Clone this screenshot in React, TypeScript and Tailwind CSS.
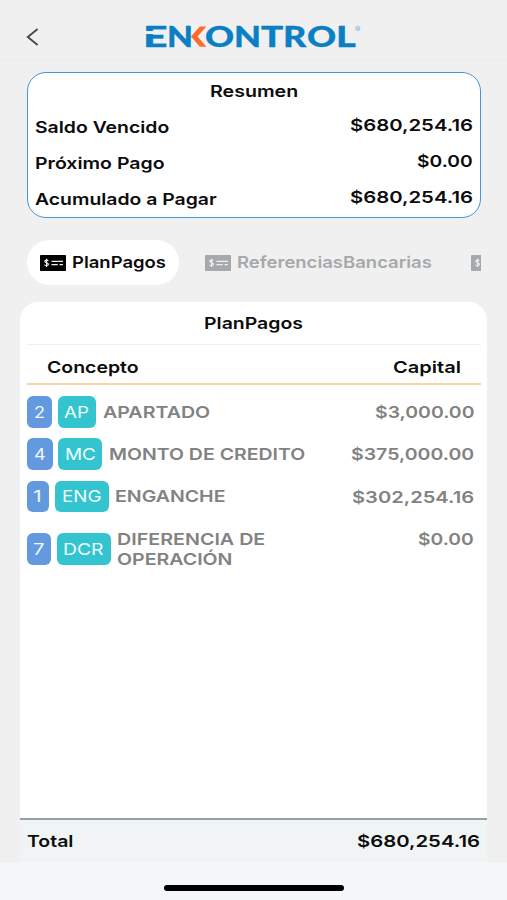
import { useLayoutEffect, useRef, useState } from "react";
import clsx from "clsx";

type FitProps = { text: string; width: number; className?: string };

// Wide-set label: stretches its text horizontally to fill the given width.
function Fit({ text, width, className }: FitProps) {
  const ref = useRef<HTMLSpanElement>(null);
  const [scale, setScale] = useState(1);
  useLayoutEffect(() => {
    if (ref.current) setScale(width / ref.current.offsetWidth);
  }, [text, width]);
  return (
    <span className={clsx("block shrink-0 whitespace-nowrap", className)} style={{ width }}>
      <span ref={ref} className="inline-block origin-left" style={{ transform: `scaleX(${scale})` }}>
        {text}
      </span>
    </span>
  );
}

function Logo() {
  const letter = "font-['Lato'] font-black [-webkit-text-stroke:0.3px_#0b7fc4]";
  return (
    <div className="flex h-[22px] items-center text-[28.5px] leading-[22px] text-[#0b7fc4]">
      <div className="relative">
        <Fit text="E" width={24} className={letter} />
        <span className="absolute left-0 top-[6px] h-[3px] w-[23px] bg-[#f0f0f0]" />
      </div>
      <Fit text="N" width={26} className={letter} />
      <svg className="-ml-[3px] h-[22px] w-[17px] shrink-0" viewBox="0 0 17 22">
        <path d="M9.8 1.5H16.4L7.6 11.6L16.4 21.7H9.8L1 11.6Z" fill="#ff6b2c" />
      </svg>
      <Fit text="O" width={29} className={clsx("-ml-[2px]", letter)} />
      <Fit text="N" width={27} className={letter} />
      <Fit text="T" width={22} className={letter} />
      <Fit text="R" width={24} className={letter} />
      <Fit text="O" width={29} className={letter} />
      <Fit text="L" width={20} className={letter} />
      <span className="-ml-px mb-[14px] text-[8px] leading-none text-[#6cabd9]">®</span>
    </div>
  );
}

function CheckIcon({ className }: { className?: string }) {
  return (
    <svg className={clsx("h-[16px] w-[26px] shrink-0", className)} viewBox="0 0 26 16">
      <rect width="26" height="16" rx="0.8" fill="currentColor" />
      <path
        d="M8.3 5.8C7.8 5 4.8 4.8 4.8 6.5C4.8 8.2 8.4 7.3 8.4 9.2C8.4 10.9 5.2 10.8 4.5 9.7M6.6 3.8V12"
        fill="none"
        stroke="#efefef"
        strokeWidth="1.2"
      />
      <path d="M11.5 6.3H23M11.5 9.6H17.7M19.5 9.6H23" fill="none" stroke="#efefef" strokeWidth="1.2" />
    </svg>
  );
}

const summary = [
  { label: "Saldo Vencido", lw: 134, value: "$680,254.16", vw: 123 },
  { label: "Próximo Pago", lw: 130, value: "$0.00", vw: 56 },
  { label: "Acumulado a Pagar", lw: 182, value: "$680,254.16", vw: 123 },
];

const concepts = [
  { n: "2", nb: "w-[25px]", nw: 11, gap: "ml-[6px]", code: "AP", cb: "w-[38.5px]", cw: 25, lines: [{ t: "APARTADO", w: 107 }], tm: "ml-[6.5px]", value: "$3,000.00", vw: 99 },
  { n: "4", nb: "w-[26px]", nw: 12, gap: "ml-[5.5px]", code: "MC", cb: "w-[44px]", cw: 31, lines: [{ t: "MONTO DE CREDITO", w: 196 }], tm: "ml-[6.5px]", value: "$375,000.00", vw: 123 },
  { n: "1", nb: "w-[22.5px]", nw: 9, gap: "ml-[6px]", code: "ENG", cb: "w-[53.5px]", cw: 40, lines: [{ t: "ENGANCHE", w: 110 }], tm: "ml-[6px]", value: "$302,254.16", vw: 122 },
  { n: "7", nb: "w-[24.5px]", nw: 11, gap: "ml-[5.5px]", code: "DCR", cb: "w-[54px]", cw: 41, lines: [{ t: "DIFERENCIA DE", w: 148 }, { t: "OPERACIÓN", w: 115 }], tm: "ml-[6px]", value: "$0.00", vw: 56 },
];

export default function App() {
  return (
    <div className="flex h-[900px] w-[507px] flex-col overflow-hidden bg-[#f0f0f0] font-['Inter',sans-serif] text-[16.5px] font-semibold leading-[20px] text-[#0c0c0c]">
      <header className="flex h-[61px] shrink-0 border-b border-[#eaebec] pl-[26px] pt-[25px]">
        <svg className="mt-[3px] h-[18px] w-[13px] shrink-0" viewBox="0 0 13 18" fill="none">
          <path d="M11.6 1L1.8 9L11.6 17" stroke="#484848" strokeWidth="1.9" />
        </svg>
        <div className="ml-[104px]">
          <Logo />
        </div>
      </header>

      <section className="mx-[26.5px] mt-[11px] flex h-[146px] shrink-0 flex-col rounded-[19px] border-[1.5px] border-[#4795d1] bg-white pl-[7.5px] pr-[7px]">
        <div className="flex h-[36px] items-center justify-center">
          <Fit text="Resumen" width={88} />
        </div>
        {summary.map((row) => (
          <div key={row.label} className="flex h-[36px] justify-between">
            <Fit text={row.label} width={row.lw} className="pt-[8px]" />
            <Fit text={row.value} width={row.vw} className="pt-[6px]" />
          </div>
        ))}
      </section>

      <nav className="ml-[27px] mr-[26px] mt-[22px] flex h-[45px] shrink-0 items-center overflow-hidden">
        <div className="flex h-[45px] w-[152px] shrink-0 items-center rounded-full bg-white pl-[13px]">
          <CheckIcon className="text-black" />
          <Fit text="PlanPagos" width={94} className="-mt-px ml-[6px]" />
        </div>
        <div className="ml-[26px] flex shrink-0 items-center text-[#a6a9ab]">
          <CheckIcon />
          <Fit text="ReferenciasBancarias" width={195} className="-mt-px ml-[6px]" />
        </div>
        <CheckIcon className="ml-[39px] text-[#a6a9ab]" />
      </nav>

      <main className="mx-[20px] mt-[17px] flex h-[516px] shrink-0 flex-col rounded-t-[18px] bg-white px-[6.5px]">
        <div className="flex h-[43px] items-center justify-center border-b border-[#eeeff0]">
          <Fit text="PlanPagos" width={99} />
        </div>
        <div className="flex h-[40px] items-center justify-between border-b-2 border-[#fbd5a6] pl-[20px] pr-[19.5px] pt-[6px]">
          <Fit text="Concepto" width={92} />
          <Fit text="Capital" width={68} />
        </div>
        <div className="flex flex-col gap-[10.7px] pt-[11px] text-[#828282]">
          {concepts.map((c) => (
            <div key={c.code} className="flex justify-between pr-[7px]">
              <div className="flex min-h-[31.6px] items-center">
                <div className={clsx("flex h-[31.6px] items-center justify-center rounded-[6px] bg-[#6399de] font-normal text-[#f0f7ff]", c.nb)}>
                  <Fit text={c.n} width={c.nw} />
                </div>
                <div className={clsx("flex h-[31.6px] items-center justify-center rounded-[6px] bg-[#34c4cf] font-normal text-[#f0ffff]", c.gap, c.cb)}>
                  <Fit text={c.code} width={c.cw} />
                </div>
                <div className={clsx(c.tm, c.lines.length > 1 && "py-[6px]")}>
                  {c.lines.map((l) => (
                    <Fit key={l.t} text={l.t} width={l.w} />
                  ))}
                </div>
              </div>
              <Fit text={c.value} width={c.vw} className="pt-[6px]" />
            </div>
          ))}
        </div>
      </main>

      <div className="mx-[20px] flex h-[44px] shrink-0 items-center justify-between border-t-2 border-[#93a2a8] bg-[#f1f4f5] pb-px pl-[7px] pr-[7px]">
        <Fit text="Total" width={46} />
        <Fit text="$680,254.16" width={123} />
      </div>

      <footer className="flex flex-1 items-start justify-center bg-[#f4f6fa] pl-px pt-[23px]">
        <div className="h-[6px] w-[180px] rounded-full bg-black" />
      </footer>
    </div>
  );
}
